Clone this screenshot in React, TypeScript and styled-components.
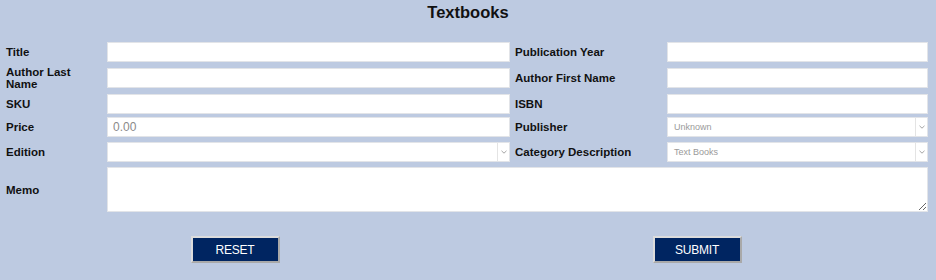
import React from 'react';
import styled, { createGlobalStyle } from 'styled-components';

const GlobalStyle = createGlobalStyle`
  html, body {
    margin: 0;
    padding: 0;
    background: #bdcae1;
  }
  body {
    font-family: 'Liberation Sans', Arial, sans-serif;
    color: #000;
  }
`;

const TextbookForm = () => {
  return (
    <Page>
      <GlobalStyle />
      <Heading>Textbooks</Heading>
      <FormGrid>
        <Label>Title</Label>
        <TextInput />
        <Label $right>Publication Year</Label>
        <TextInput />

        <Label>
          Author Last
          <br />
          Name
        </Label>
        <TextInput />
        <Label $right>Author First Name</Label>
        <TextInput />

        <Label>SKU</Label>
        <TextInput />
        <Label $right>ISBN</Label>
        <TextInput />

        <Label>Price</Label>
        <TextInput placeholder="0.00" />
        <Label $right>Publisher</Label>
        <Dropdown value="Unknown" />

        <Label>Edition</Label>
        <Dropdown value="" />
        <Label $right>Category Description</Label>
        <Dropdown value="Text Books" />

        <Label $tall>Memo</Label>
        <Memo />
      </FormGrid>
      <Actions>
        <Button type="button">RESET</Button>
        <Button type="button">SUBMIT</Button>
      </Actions>
    </Page>
  );
};

const Dropdown = ({ value }: { value: string }) => (
  <SelectBox>
    <SelectText>{value}</SelectText>
    <ArrowCell>
      <svg width="6" height="4" viewBox="0 0 6 4">
        <path d="M0.5 0.8 L3 3.2 L5.5 0.8" fill="none" stroke="#9a9a9a" strokeWidth="0.9" />
      </svg>
    </ArrowCell>
  </SelectBox>
);

export default function App() {
  return <TextbookForm />;
}

const Page = styled.div`
  width: 936px;
  height: 280px;
  background: #bdcae1;
  overflow: hidden;
`;

const Heading = styled.h1`
  margin: 0;
  padding-top: 3px;
  height: 42px;
  box-sizing: border-box;
  text-align: center;
  font-size: 16.5px;
  line-height: 18px;
  font-weight: 700;
  color: #111;
`;

const FormGrid = styled.div`
  display: grid;
  grid-template-columns: 101px 403px 157px 261px;
  grid-template-rows: 26px 26px 23px 25px 25px 45px;
  align-items: start;
  padding-left: 6px;
`;

const Label = styled.div<{ $right?: boolean; $tall?: boolean }>`
  height: ${(p) => (p.$tall ? '45px' : '20px')};
  display: flex;
  align-items: center;
  padding-left: ${(p) => (p.$right ? '5px' : '0')};
  font-size: 11.5px;
  line-height: 12px;
  font-weight: 700;
  color: #111;
  white-space: nowrap;
`;

const TextInput = styled.input`
  box-sizing: border-box;
  width: 100%;
  height: 20px;
  margin: 0;
  padding: 0 5px;
  border: 1px solid #e2e4e8;
  background: #fff;
  font-family: 'Liberation Sans', Arial, sans-serif;
  font-size: 12px;
  outline: none;

  &::placeholder {
    color: #8a8a8a;
  }
`;

const SelectBox = styled.div`
  box-sizing: border-box;
  width: 100%;
  height: 20px;
  display: flex;
  align-items: stretch;
  border: 1px solid #e2e4e8;
  background: #fff;
`;

const SelectText = styled.span`
  flex: 1;
  display: flex;
  align-items: center;
  padding-left: 6px;
  font-size: 9px;
  color: #9a9a9a;
`;

const ArrowCell = styled.span`
  width: 11px;
  display: flex;
  align-items: center;
  justify-content: center;
  border-left: 1px solid #e4e4e4;
`;

const Memo = styled.textarea`
  grid-column: 2 / 5;
  box-sizing: border-box;
  width: 100%;
  height: 45px;
  margin: 0;
  padding: 3px 5px;
  border: 1px solid #e2e4e8;
  background: #fff;
  resize: both;
  outline: none;
  font-family: 'Liberation Sans', Arial, sans-serif;
  font-size: 12px;
`;

const Actions = styled.div`
  display: grid;
  grid-template-columns: 470px 454px;
  justify-items: center;
  margin-top: 24px;
`;

const Button = styled.button`
  box-sizing: border-box;
  width: 89px;
  height: 27px;
  padding: 0;
  background: #002561;
  color: #fff;
  border: 2px solid;
  border-color: #dcdcdc #a9a9a9 #a9a9a9 #dcdcdc;
  font-family: 'Liberation Sans', Arial, sans-serif;
  font-size: 12px;
  letter-spacing: -0.2px;
  cursor: pointer;
`;
